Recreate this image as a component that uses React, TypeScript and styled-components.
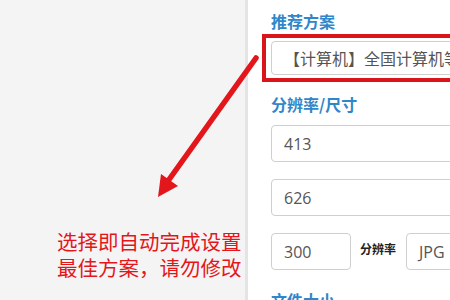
import styled, { createGlobalStyle } from "styled-components";

const GlobalStyle = createGlobalStyle`
    html, body {
        margin: 0;
        padding: 0;
        background: #ffffff;
    }
    body {
        font-family: "Open Sans", "Noto Sans CJK SC", sans-serif;
    }
`;

const Page = styled.div`
    position: relative;
    display: flex;
    width: 450px;
    height: 300px;
    overflow: hidden;
`;

const LeftPane = styled.div`
    flex: none;
    width: 245px;
    background: #f4f4f4;
    padding: 228px 0 0 57px;
    box-sizing: border-box;
`;

const Note = styled.p`
    margin: 0;
    color: #e3161b;
    font-family: "Noto Sans CJK SC", sans-serif;
    font-size: 20.5px;
    line-height: 26px;
    white-space: nowrap;
`;

const Panel = styled.div`
    flex: none;
    width: 320px;
    background: #ffffff;
    border-left: 3px solid #e4e4e4;
    padding: 10px 0 0 23px;
    display: flex;
    flex-direction: column;
`;

const SectionTitle = styled.h3<{ $gap?: number }>`
    margin: ${ (p) => p.$gap ?? 0 }px 0 0;
    color: #2f86c9;
    font-family: "Noto Sans CJK SC", sans-serif;
    font-size: 16px;
    font-weight: 700;
    line-height: 22px;
    white-space: nowrap;
`;

const Highlight = styled.div`
    margin: 2px 0 0 -9px;
    padding: 3px 5px;
    border: 4px solid #d9141b;
`;

const Field = styled.div<{ $width?: number; $height?: number; $gap?: number }>`
    box-sizing: border-box;
    flex: none;
    width: ${ (p) => (p.$width ? `${ p.$width }px` : "100%") };
    height: ${ (p) => p.$height ?? 37 }px;
    margin-top: ${ (p) => p.$gap ?? 0 }px;
    border: 1px solid #cfcfcf;
    border-radius: 4px;
    padding: 0 12px;
    display: flex;
    align-items: center;
    color: #555;
    font-size: 16px;
    white-space: nowrap;
    overflow: hidden;
`;

const Row = styled.div`
    display: flex;
    align-items: center;
    margin-top: 17px;
`;

const RowLabel = styled.span`
    margin: 0 10px 0 9px;
    padding-bottom: 6px;
    color: #222;
    font-family: "Noto Sans CJK SC", sans-serif;
    font-size: 12px;
    font-weight: 700;
    white-space: nowrap;
`;

const Arrow = styled.svg`
    position: absolute;
    left: 0;
    top: 0;
    pointer-events: none;
`;

export default function App() {
    return (
        <>
            <GlobalStyle />
            <Page>
                <LeftPane>
                    <Note>
                        选择即自动完成设置
                        <br />
                        最佳方案，请勿修改
                    </Note>
                </LeftPane>
                <Panel>
                    <SectionTitle>推荐方案</SectionTitle>
                    <Highlight>
                        <Field $height={34}>【计算机】全国计算机等级考试</Field>
                    </Highlight>
                    <SectionTitle $gap={11}>分辨率/尺寸</SectionTitle>
                    <Field $gap={10}>413</Field>
                    <Field $gap={17}>626</Field>
                    <Row>
                        <Field $width={80}>300</Field>
                        <RowLabel>分辨率</RowLabel>
                        <Field>JPG</Field>
                    </Row>
                    <SectionTitle $gap={19}>文件大小</SectionTitle>
                </Panel>
                <Arrow width="450" height="300" viewBox="0 0 450 300">
                    <line x1="256" y1="58" x2="168" y2="181" stroke="#e3161b" strokeWidth="5.5" strokeLinecap="round" />
                    <polygon points="158,197 161,174 178,186" fill="#e3161b" />
                </Arrow>
            </Page>
        </>
    );
}
